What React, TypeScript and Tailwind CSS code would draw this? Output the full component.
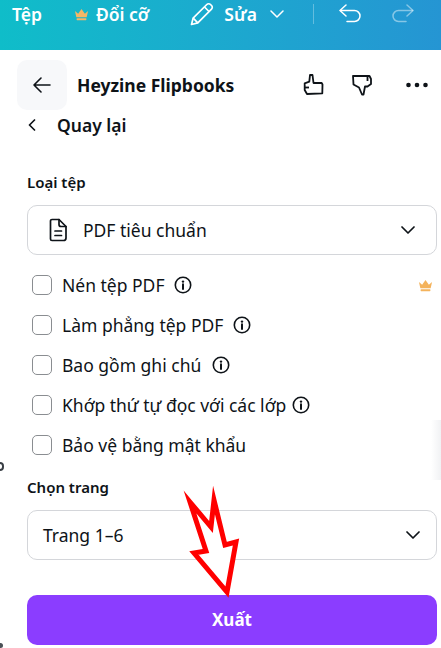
import React from "react";

const font = { fontFamily: '"Noto Sans", "Open Sans", sans-serif' };

function Info() {
  return (
    <svg width="18" height="18" viewBox="0 0 18 18" fill="none" className="shrink-0">
      <circle cx="9" cy="9" r="7.7" stroke="#0e1318" strokeWidth="1.6" />
      <circle cx="9" cy="5.6" r="1.2" fill="#0e1318" />
      <path d="M9 8.2v4.8" stroke="#0e1318" strokeWidth="2" strokeLinecap="round" />
    </svg>
  );
}

function Crown({ size = 16, color = "#f4b35c" }: { size?: number; color?: string }) {
  return (
    <svg width={size} height={size} viewBox="0 0 16 16" fill={color}>
      <path d="M1 4.2l3.4 3L8 2l3.6 5.2L15 4.2 13.5 11h-11z" />
      <rect x="2.8" y="12" width="10.4" height="2" rx="0.5" />
    </svg>
  );
}

function Chevron() {
  return (
    <svg width="14" height="9" viewBox="0 0 14 9" fill="none">
      <path d="M1 1l6 6 6-6" stroke="#0e1318" strokeWidth="1.7" strokeLinecap="round" strokeLinejoin="round" />
    </svg>
  );
}

function Check({ label, gap, info = true, crown = false }: { label: string; gap: string; info?: boolean; crown?: boolean }) {
  return (
    <div className="flex h-10 items-center pl-[5px] pr-[4px]">
      <div className="h-5 w-5 shrink-0 rounded-[5px] border border-[#8a8d91] bg-white" />
      <span className="ml-[10px] text-[17.5px] leading-6 text-[#0e1318]">{label}</span>
      {info && <span className={gap}><Info /></span>}
      {crown && (
        <span className="ml-auto">
          <Crown size={15} />
        </span>
      )}
    </div>
  );
}

export default function App() {
  return (
    <div style={font} className="relative h-[648px] w-[441px] overflow-hidden bg-white">
      <header className="flex h-[50px] items-start bg-gradient-to-r from-[#0fbdc9] to-[#2595d3] pl-3 pt-[3px] text-white">
        <span className="text-[17.5px] font-semibold leading-[22px]">Tệp</span>
        <span className="ml-[32px] mt-[4px]"><Crown size={15} color="#f5b766" /></span>
        <span className="ml-[7px] text-[17.5px] font-semibold leading-[22px]">Đổi cỡ</span>
        <svg width="24" height="24" viewBox="0 0 24 24" fill="none" className="ml-[41px] -mt-[1px]" stroke="white" strokeWidth="1.7" strokeLinejoin="round">
          <path d="M1.5 22.5l1.6-6.3L16.8 2.5a2.6 2.6 0 0 1 3.7 0l1 1a2.6 2.6 0 0 1 0 3.7L7.8 20.9z" />
          <path d="M14.5 5l4.5 4.5M3.2 16.2l4.6 4.6" />
        </svg>
        <span className="ml-[10px] text-[17.5px] font-semibold leading-[22px]">Sửa</span>
        <svg width="14" height="9" viewBox="0 0 14 9" fill="none" className="ml-[13px] mt-[7px]">
          <path d="M1 1l6 6 6-6" stroke="white" strokeWidth="1.5" strokeLinecap="round" strokeLinejoin="round" />
        </svg>
        <div className="ml-[29px] mt-[1px] h-[20px] w-px bg-white/30" />
        <svg width="22" height="19" viewBox="0 0 22 19" fill="none" className="ml-[25px] mt-[1px]" stroke="white" strokeWidth="1.5" strokeLinecap="round" strokeLinejoin="round">
          <path d="M7 1 1 6.5 7 12" />
          <path d="M1.5 6.5H15.5a5.5 5.5 0 0 1 0 11H8" />
        </svg>
        <svg width="22" height="19" viewBox="0 0 22 19" fill="none" className="ml-[31px] mt-[1px]" stroke="white" strokeOpacity="0.45" strokeWidth="1.5" strokeLinecap="round" strokeLinejoin="round">
          <path d="M15 1l6 5.5L15 12" />
          <path d="M20.5 6.5H6.5a5.5 5.5 0 0 0 0 11H14" />
        </svg>
      </header>

      <div className="box-content flex h-[50px] items-center pl-[17px] pr-[13px] pt-[10px]">
        <button className="flex h-[50px] w-[50px] items-center justify-center rounded-[10px] bg-[#f7f8fa]">
          <svg width="18" height="16" viewBox="0 0 18 16" fill="none" stroke="#0e1318" strokeWidth="1.6" strokeLinecap="round" strokeLinejoin="round">
            <path d="M17 8H1M8 1 1 8l7 7" />
          </svg>
        </button>
        <span className="ml-[10px] text-[17.5px] font-bold leading-6 text-[#0e1318]">Heyzine Flipbooks</span>
        <svg width="22" height="22" viewBox="0 0 22 22" fill="none" className="ml-auto" stroke="#0e1318" strokeWidth="1.8" strokeLinejoin="round">
          <path d="M8 1h2.500l1 8H19.700l.8 1.500-.2 8.800-15.300.7L2.700 16V9.300L7.300 7.700z" />
          <path d="M2.700 13.500H7" />
        </svg>
        <svg width="22" height="22" viewBox="0 0 22 22" fill="none" className="ml-[28px]" stroke="#0e1318" strokeWidth="1.8" strokeLinejoin="round">
          <path d="M1 2H17.500L19 5V10L15.500 12.500H13L11.500 20.500H10L7 13.500 1.500 10.500Z" />
          <path d="M15.500 2.500V7" />
        </svg>
        <svg width="22" height="6" viewBox="0 0 22 6" fill="#0e1318" className="ml-[32px]">
          <circle cx="2.5" cy="3" r="2.3" />
          <circle cx="11" cy="3" r="2.3" />
          <circle cx="19.5" cy="3" r="2.3" />
        </svg>
      </div>

      <main className="pl-[27px] pr-[4px]">
        <div className="mt-[2px] flex h-[26px] items-center">
          <svg width="8" height="12" viewBox="0 0 8 12" fill="none" stroke="#0e1318" strokeWidth="1.7" strokeLinecap="round" strokeLinejoin="round" className="ml-[1px]">
            <path d="M6.5 1 1.5 6l5 5" />
          </svg>
          <span className="ml-[21px] text-[17.5px] font-semibold leading-[26px] text-[#0e1318]">Quay lại</span>
        </div>

        <div className="mt-[34px] text-[15px] font-semibold leading-5 text-[#0e1318]">Loại tệp</div>
        <div className="mt-[13px] flex h-[50px] w-[410px] items-center rounded-[10px] border border-[#d4d6da] pl-[21px] pr-[21px]">
          <svg width="18" height="24" viewBox="0 0 18 24" fill="none" stroke="#0e1318" strokeWidth="1.7" strokeLinejoin="round" strokeLinecap="round">
            <path d="M3 1.5h7l7 7v11.500a2.500 2.500 0 0 1-2.500 2.500h-11.500A1.500 1.500 0 0 1 1.500 21V3A1.500 1.500 0 0 1 3 1.500z" />
            <path d="M10 1.500v5a2 2 0 0 0 2 2h5M6 13h6.500M6 17.500h6.500" />
          </svg>
          <span className="ml-[16px] -mt-[1px] text-[17.5px] leading-6 text-[#0e1318]">PDF tiêu chuẩn</span>
          <span className="ml-auto"><Chevron /></span>
        </div>

        <div className="mt-[10px] w-[410px]">
          <Check label="Nén tệp PDF" gap="ml-[10px]" crown />
          <Check label="Làm phẳng tệp PDF" gap="ml-[10px]" />
          <Check label="Bao gồm ghi chú" gap="ml-[11px]" />
          <Check label="Khớp thứ tự đọc với các lớp" gap="ml-[6px]" />
          <Check label="Bảo vệ bằng mật khẩu" gap="" info={false} />
        </div>

        <div className="mt-[12px] text-[15px] font-semibold leading-5 text-[#0e1318]">Chọn trang</div>
        <div className="mt-[13px] flex h-[50px] w-[410px] items-center rounded-[10px] border border-[#d4d6da] pl-[15px] pr-[16px]">
          <span className="text-[17.5px] leading-6 text-[#0e1318]">Trang 1–6</span>
          <span className="ml-auto"><Chevron /></span>
        </div>
        <button className="mt-[35px] flex h-[50px] w-[410px] items-center justify-center rounded-[10px] bg-[#8b3dff] text-[17px] font-bold text-white">
          Xuất
        </button>
      </main>

      <svg width="441" height="648" viewBox="0 0 441 648" fill="none" className="pointer-events-none absolute left-0 top-0">
        <path d="M190 502 211 527 214 500 225 545 236 542 227 592 194 553 206 551Z" fill="white" stroke="#ff0000" strokeWidth="5" strokeMiterlimit="8" />
      </svg>
      <div className="absolute right-0 top-[420px] h-[60px] w-[10px] bg-gradient-to-r from-white to-[#f1f2f4]" />
      <div className="absolute left-[-4px] top-[462px] h-[9px] w-[8px] rounded-full border-2 border-[#3a3f45]" />
      <div className="absolute left-0 top-[643px] h-[5px] w-[3px] rounded-r-full bg-[#4a5056]" />
    </div>
  );
}
